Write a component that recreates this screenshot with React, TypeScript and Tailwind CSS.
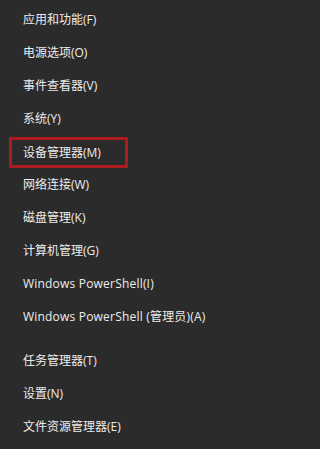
const items = [
  "应用和功能(F)",
  "电源选项(O)",
  "事件查看器(V)",
  "系统(Y)",
  "设备管理器(M)",
  "网络连接(W)",
  "磁盘管理(K)",
  "计算机管理(G)",
  "Windows PowerShell(I)",
  "Windows PowerShell (管理员)(A)",
]

const bottomItems = ["任务管理器(T)", "设置(N)", "文件资源管理器(E)"]

function Row({ label, highlight }: { label: string; highlight?: boolean }) {
  if (highlight) {
    return (
      <div className="h-[33px] flex items-center">
        <div className="ml-[9px] mt-[2px] w-[119px] h-[31px] border-[3px] border-[#ab1c21] flex items-center pl-[11px]">
          {label}
        </div>
      </div>
    )
  }
  const latin = label.startsWith("Windows")
  return (
    <div className={latin ? "h-[33px] flex items-center pl-[23px] tracking-[0.2px]" : "h-[33px] flex items-center pl-[23px]"}>
      {label}
    </div>
  )
}

export default function App() {
  return (
    <div
      className="w-full min-w-[264px] h-[449px] bg-[#2b2b2b] text-[#ededed] text-[12px] pt-[3px] overflow-hidden"
      style={{ fontFamily: '"Open Sans", "Noto Sans CJK SC", sans-serif' }}
    >
      {items.map((label) => (
        <Row key={label} label={label} highlight={label === "设备管理器(M)"} />
      ))}
      <div className="h-[11px]" />
      {bottomItems.map((label) => (
        <Row key={label} label={label} />
      ))}
    </div>
  )
}
